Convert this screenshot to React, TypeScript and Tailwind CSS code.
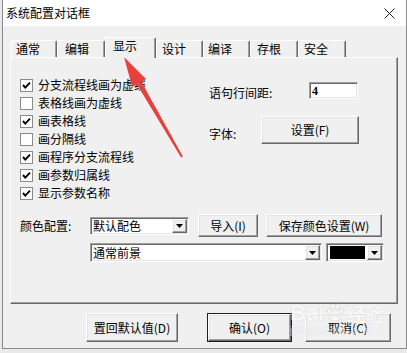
import React from "react";

const F = "font-['Noto_Sans_CJK_SC','Liberation_Sans',sans-serif]";

const RAISED =
  "bg-[#f0f0f0] border border-t-white border-l-white border-r-[#696969] border-b-[#696969] shadow-[inset_-1px_-1px_0_#a0a0a0,inset_1px_1px_0_#e3e3e3]";
const SUNKEN =
  "bg-white border border-t-[#a0a0a0] border-l-[#a0a0a0] border-r-white border-b-white shadow-[inset_1px_1px_0_#696969,inset_-1px_-1px_0_#e3e3e3]";

function Btn({ cls, children, def }: { cls: string; children: React.ReactNode; def?: boolean }) {
  if (def) {
    return (
      <div className={`${cls} border border-[#1e1e1e] flex`}>
        <div className={`${RAISED} flex-1 flex items-center justify-center text-[12px] leading-none text-black`}>
          {children}
        </div>
      </div>
    );
  }
  return (
    <div className={`${cls} ${RAISED} flex items-center justify-center text-[12px] leading-none text-black`}>
      {children}
    </div>
  );
}

function Arrow() {
  return (
    <div className={`${RAISED} w-[15px] h-full flex items-center justify-center`}>
      <svg width="7" height="4" viewBox="0 0 7 4">
        <polygon points="0,0 7,0 3.5,4" fill="#000" />
      </svg>
    </div>
  );
}

function CB({ checked, label }: { checked: boolean; label: string }) {
  return (
    <div className="flex items-center h-[18px]">
      <div className="w-[13px] h-[13px] border border-[#8a8a8a] bg-white flex items-center justify-center">
        {checked && (
          <svg width="11" height="11" viewBox="0 0 11 11">
            <polyline points="2,5 4.3,7.6 9,2.6" fill="none" stroke="#000" strokeWidth="1.9" />
          </svg>
        )}
      </div>
      <span className="ml-[5px] text-[12px] leading-none text-black">{label}</span>
    </div>
  );
}

const TAB_BASE =
  "bg-[#f0f0f0] border-t border-l border-r border-t-white border-l-white border-r-[#696969] shadow-[inset_-1px_0_0_#a0a0a0] rounded-tl-[2px] rounded-tr-[2px] text-[12px] text-black";

export default function App() {
  const tabs: { t: string; cls: string; active?: boolean }[] = [
    { t: "通常", cls: "w-[46px] pl-[4px]" },
    { t: "编辑", cls: "w-[48px] pl-[7px]" },
    { t: "显示", cls: "w-[51px] pl-[7px]", active: true },
    { t: "设计", cls: "w-[47px] pl-[5px]" },
    { t: "编译", cls: "w-[47px] pl-[4px]" },
    { t: "存根", cls: "w-[48px] pl-[6px]" },
    { t: "安全", cls: "w-[48px] pl-[5px]" },
  ];

  const checks: [boolean, string][] = [
    [true, "分支流程线画为虚线"],
    [false, "表格线画为虚线"],
    [true, "画表格线"],
    [false, "画分隔线"],
    [true, "画程序分支流程线"],
    [true, "画参数归属线"],
    [true, "显示参数名称"],
  ];

  return (
    <div className={`${F} relative w-[407px] h-[353px] bg-[#e9e9e9] overflow-hidden`}>
      <div className="ml-[2px] w-[405px] h-[349px] border-l border-r border-b border-[#8a8a8a] bg-[#f0f0f0] flex flex-col">
        {/* title bar */}
        <div className="h-[26px] bg-white flex items-center justify-between pl-[3px] pr-[11px]">
          <span className="text-[12px] leading-none text-black">系统配置对话框</span>
          <svg width="11" height="11" viewBox="0 0 11 11">
            <line x1="0.5" y1="0.5" x2="10.5" y2="10.5" stroke="#222" strokeWidth="1" />
            <line x1="10.5" y1="0.5" x2="0.5" y2="10.5" stroke="#222" strokeWidth="1" />
          </svg>
        </div>

        {/* body */}
        <div className="flex-1 pt-[11px]">
          {/* tabs */}
          <div className="ml-[8px] flex items-end h-[20px]">
            {tabs.map((tb) =>
              tb.active ? (
                <div
                  key={tb.t}
                  className={`${TAB_BASE} ${tb.cls} h-[21px] -mb-[1px] relative z-10 flex items-start pt-[1px] leading-[14px]`}
                >
                  {tb.t}
                </div>
              ) : (
                <div key={tb.t} className={`${TAB_BASE} ${tb.cls} h-[17px] flex items-center leading-none`}>
                  {tb.t}
                </div>
              )
            )}
          </div>

          {/* panel */}
          <div className="ml-[7px] w-[388px] h-[247px] border border-t-white border-l-white border-r-[#696969] border-b-[#696969] shadow-[inset_-1px_-1px_0_#a0a0a0] flex flex-col">
            <div className="h-[156px] flex">
              <div className="w-[198px] pl-[9px] pt-[18px] flex flex-col">
                {checks.map(([c, l]) => (
                  <CB key={l} checked={c} label={l} />
                ))}
              </div>
              <div className="pt-[24px] flex flex-col">
                <div className="flex items-center h-[17px]">
                  <span className="w-[100px] pt-[4px] text-[12px] leading-none">语句行间距:</span>
                  <div className={`${SUNKEN} w-[49px] h-[17px] flex items-center pl-[2px] text-[12px] font-bold leading-none font-['Liberation_Serif',serif]`}>
                    4
                  </div>
                </div>
                <div className="flex items-center mt-[17px]">
                  <span className="w-[52px] pt-[8px] text-[12px] leading-none">字体:</span>
                  <Btn cls="w-[98px] h-[28px]">设置(F)</Btn>
                </div>
              </div>
            </div>

            <div className="flex items-center h-[23px] pl-[9px]">
              <span className="w-[70px] text-[12px] leading-none">颜色配置:</span>
              <div className={`${SUNKEN} w-[99px] h-[18px] p-[1px] flex items-center`}>
                <span className="flex-1 text-[12px] leading-none pl-[1px]">默认配色</span>
                <Arrow />
              </div>
              <Btn cls="ml-[9px] w-[60px] h-[23px]">导入(I)</Btn>
              <Btn cls="ml-[8px] w-[116px] h-[23px]">保存颜色设置(W)</Btn>
            </div>

            <div className="flex items-center h-[19px] mt-[6px] pl-[79px]">
              <div className={`${SUNKEN} w-[232px] h-[19px] p-[1px] flex items-center`}>
                <span className="flex-1 text-[12px] leading-none pl-[1px]">通常前景</span>
                <Arrow />
              </div>
              <div className={`${SUNKEN} ml-[4px] w-[58px] h-[19px] p-[1px] flex items-center`}>
                <div className="ml-[2px] w-[35px] h-[13px] bg-black" />
                <div className="flex-1" />
                <Arrow />
              </div>
            </div>
          </div>

          {/* bottom buttons */}
          <div className="flex mt-[9px] ml-[83px]">
            <Btn cls="w-[92px] h-[29px]">置回默认值(D)</Btn>
            <Btn cls="ml-[29px] w-[85px] h-[29px]" def>
              确认(O)
            </Btn>
            <Btn cls="ml-[13px] w-[86px] h-[29px]">取消(C)</Btn>
          </div>
        </div>
      </div>

      {/* red annotation arrow */}
      <svg className="absolute left-0 top-0 pointer-events-none" width="407" height="353" viewBox="0 0 407 353">
        <polygon points="124,57 146,79 132.2,87" fill="#e8403b" />
        <polygon points="141.3,81.7 136.9,84.3 181.1,157.5 182.9,156.5" fill="#e8403b" />
      </svg>

      {/* watermark */}
      <div className="absolute left-[290px] top-[302px] pointer-events-none flex flex-col items-start opacity-50">
        <div className="flex items-center text-[22px] font-bold leading-none text-white [text-shadow:0_0_1px_#b0b0b0]">
          <span className="font-['Liberation_Sans',sans-serif]">Bai</span>
          <svg width="20" height="20" viewBox="0 0 22 22" className="mx-[1px]">
            <g fill="#fff" stroke="#b0b0b0" strokeWidth="0.6">
              <ellipse cx="5" cy="9" rx="2.5" ry="3" />
              <ellipse cx="9" cy="4" rx="2.5" ry="3" />
              <ellipse cx="14" cy="4" rx="2.5" ry="3" />
              <ellipse cx="18" cy="9" rx="2.5" ry="3" />
              <path d="M5 18 Q11 8 17 18 Q11 22 5 18 Z" />
            </g>
          </svg>
          <span className="text-[19px]">经验</span>
        </div>
        <span className="text-[10px] leading-none text-white [text-shadow:0_0_1px_#b0b0b0] font-['Liberation_Sans',sans-serif] mt-[2px]">
          jingyan.baidu.com
        </span>
      </div>
    </div>
  );
}
